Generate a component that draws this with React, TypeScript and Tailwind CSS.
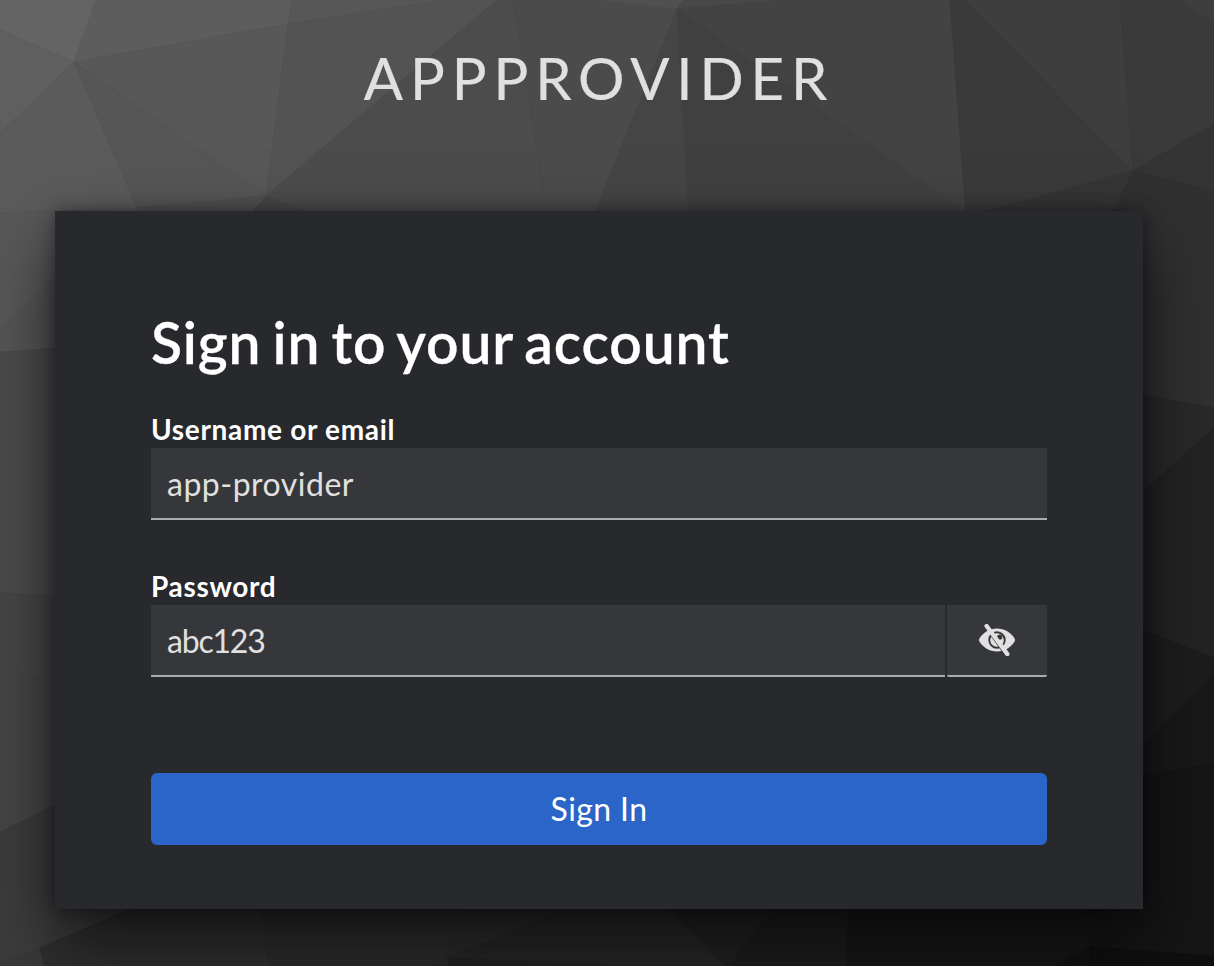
const facets: [string, string][] = [
  // upper band
  ["0,0 96,0 74,62 0,30", "#646464"],
  ["96,0 293,0 288,24 74,62", "#5d5d5d"],
  ["0,30 74,62 0,133", "#5f5f5f"],
  ["74,62 288,24 266,196", "#585858"],
  ["0,133 74,62 137,208 55,211 0,213", "#5b5b5b"],
  ["74,62 266,196 137,208", "#565656"],
  ["293,0 445,0 288,24", "#575757"],
  ["288,24 445,0 497,0 266,196", "#535353"],
  ["497,0 514,0 551,240 380,240 266,196", "#4c4c4c"],
  ["514,0 600,0 677,9 596,211 584,240 551,240", "#4b4b4b"],
  ["600,0 683,0 677,9", "#505050"],
  ["683,0 790,0 677,9", "#484848"],
  ["677,9 689,211 690,240 584,240", "#454545"],
  ["677,9 966,211 966,240 690,240", "#404040"],
  ["677,9 790,0 950,0 966,212", "#434343"],
  ["950,0 965,0 1133,171 966,217", "#3a3a3a"],
  ["965,0 1120,0 1133,171", "#3e3e3e"],
  ["1120,0 1178,0 1214,22 1214,124 1133,171", "#3a3a3a"],
  ["1178,0 1214,0 1214,22", "#3e3e3e"],
  ["1133,171 1214,124 1214,191", "#343434"],
  ["1133,171 1090,260 966,260 966,217", "#353535"],
  ["266,196 137,208 137,240 230,240", "#515151"],
  ["266,196 380,240 230,240", "#484848"],
  // left margin
  ["0,213 137,208 137,240 55,280 0,328", "#585858"],
  ["0,328 80,258 80,347 0,352", "#555555"],
  ["0,352 80,347 80,597 0,593", "#4b4b4b"],
  ["0,593 80,597 80,694 0,665", "#464646"],
  ["0,665 80,694 80,793 0,832", "#454545"],
  ["0,832 80,793 80,883 40,948 0,962", "#3c3c3c"],
  ["0,962 40,948 45,966 0,966", "#393939"],
  ["40,948 80,880 150,900", "#3a3a3a"],
  // right margin
  ["1133,171 1214,191 1214,408 1100,387 1090,260", "#303030"],
  ["1100,387 1214,408 1214,428 1100,531", "#292929"],
  ["1100,531 1214,428 1214,658 1100,613", "#232323"],
  ["1100,613 1214,658 1214,674 1100,788", "#1d1d1d"],
  ["1100,788 1214,674 1214,764 1100,783", "#191919"],
  ["1093,784 1214,764 1214,956 1090,947", "#151515"],
  // lower band
  ["40,948 130,909 152,899 261,899 268,966 45,966", "#2f2f2f"],
  ["261,899 463,899 448,957 431,966 268,966", "#2c2c2c"],
  ["463,899 595,899 448,957", "#2b2b2b"],
  ["448,957 431,966 449,966", "#292929"],
  ["448,957 640,966 449,966", "#222222"],
  ["448,957 595,899 660,899 725,966 640,966", "#272727"],
  ["660,899 782,899 730,966 725,966", "#212121"],
  ["782,899 849,899 846,966 730,966", "#1d1d1d"],
  ["849,899 1093,899 1090,947 1052,966 846,966", "#171717"],
  ["1090,947 1090,966 1052,966", "#121212"],
  ["1090,947 1214,956 1214,966 1090,966", "#0f0f0f"],
];

function Backdrop() {
  return (
    <svg
      className="absolute inset-0 h-full w-full"
      viewBox="0 0 1214 966"
      preserveAspectRatio="none"
      aria-hidden="true"
    >
      {facets.map(([points, fill]) => (
        <polygon key={points} points={points} fill={fill} stroke={fill} strokeWidth="0.7" strokeLinejoin="round" />
      ))}
    </svg>
  );
}

function EyeSlash() {
  return (
    <svg className="h-8 w-9" viewBox="0 0 576 512" aria-hidden="true">
      <path
        fill="#e0e0e0"
        d="M7 232C64 136 169 72 288 72s224 64 281 160a48 48 0 0 1 0 48C512 376 407 440 288 440S64 376 7 280a48 48 0 0 1 0-48z"
      />
      <circle cx="288" cy="256" r="124" fill="none" stroke="#36373a" strokeWidth="30" />
      <circle cx="332" cy="208" r="42" fill="#36373a" />
      <path d="M190 170 390 448" stroke="#36373a" strokeWidth="30" />
      <path d="M122 32 454 482" stroke="#e0e0e0" strokeWidth="68" strokeLinecap="round" />
    </svg>
  );
}

export default function App() {
  return (
    <div className="relative h-[966px] w-full overflow-hidden bg-[#333333] font-['Lato','Liberation_Sans',sans-serif]">
      <Backdrop />
      <div className="relative flex flex-col pl-[55px]">
        <header className="flex h-[211px] w-[1088px] justify-center pt-[43px]">
          <h1 className="whitespace-nowrap text-[58px] leading-[70px] tracking-[6.9px] text-[#e0e0e0] [-webkit-text-stroke:0.2px_#e0e0e0]">
            APPPROVIDER
          </h1>
        </header>
        <main className="flex h-[698px] w-[1088px] flex-col bg-[#28292d] px-24 pt-[105px] shadow-[0_32px_64px_0_rgba(3,3,3,0.64),0_0_16px_0_rgba(3,3,3,0.4)]">
          <h2 className="-mt-[2px] h-[99px] whitespace-nowrap text-[57px] leading-[56px] font-semibold tracking-[0.9px] text-white [word-spacing:-4px] [-webkit-text-stroke:0.3px_white]">
            Sign in to your account
          </h2>
          <form className="flex flex-col" onSubmit={(e) => e.preventDefault()}>
            <label className="h-[35px] text-[28px] leading-8 font-bold tracking-[0.68px] text-white" htmlFor="username">
              Username or email
            </label>
            <input
              id="username"
              className="h-[72px] w-full border-b-2 border-[#aaabac] bg-[#36373a] px-4 text-[32px] tracking-[0.5px] text-[#e0e0e0] outline-none"
              defaultValue="app-provider"
            />
            <label className="mt-[50px] h-[35px] text-[28px] leading-8 font-bold tracking-[0.68px] text-white" htmlFor="password">
              Password
            </label>
            <div className="flex gap-0.5">
              <input
                id="password"
                className="h-[72px] w-[794px] border-b-2 border-[#aaabac] bg-[#36373a] px-4 text-[32px] tracking-[-1.2px] text-[#e0e0e0] outline-none"
                defaultValue="abc123"
              />
              <button
                type="button"
                aria-label="Hide password"
                className="flex h-[72px] w-[100px] items-center justify-center rounded-b-[2px] border-b-2 border-[#aaabac] bg-[#36373a]"
              >
                <EyeSlash />
              </button>
            </div>
            <button
              type="submit"
              className="mt-24 h-[72px] w-full rounded-[6px] bg-[#2b65c7] text-[32px] leading-[72px] tracking-[0.4px] text-white"
            >
              Sign In
            </button>
          </form>
        </main>
      </div>
    </div>
  );
}
